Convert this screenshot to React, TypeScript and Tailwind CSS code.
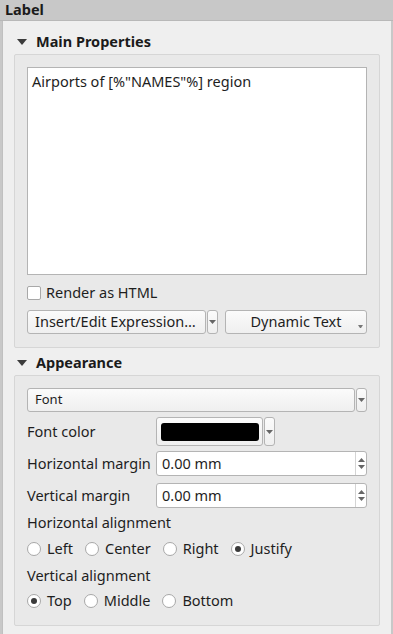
import { ReactNode } from 'react'

const font = { fontFamily: '"Noto Sans", "Open Sans", sans-serif' }

function Arrow() {
  return <svg width="7" height="4" viewBox="0 0 7 4"><path d="M0 0h7L3.5 4z" fill="#666" /></svg>
}

function Section({ title, children }: { title: string; children: ReactNode }) {
  return (
    <div>
      <div className="flex items-center h-[24px] pl-[14px] gap-[9px]">
        <svg width="10" height="6" viewBox="0 0 10 6"><path d="M0 0h10L5 6z" fill="#3c3c3c" /></svg>
        <span className="font-bold text-[14.5px] text-[#1b1b1b]">{title}</span>
      </div>
      <div className="mx-[11px] bg-[#e9e9e9] border border-[#d6d6d6] rounded-[2px] px-[12px]">{children}</div>
    </div>
  )
}

function Radio({ label, checked }: { label: string; checked?: boolean }) {
  return (
    <div className="flex items-center gap-[6px]">
      <span className="w-[14px] h-[14px] rounded-full border border-[#a8a8a8] bg-white flex items-center justify-center">
        {checked && <span className="w-[6px] h-[6px] rounded-full bg-[#3a3a3a]" />}
      </span>
      <span>{label}</span>
    </div>
  )
}

function Spin({ value }: { value: string }) {
  return (
    <div className="flex-1 h-[25px] bg-white border border-[#b4b4b4] rounded-[3px] flex items-center">
      <span className="flex-1 pl-[5px]">{value}</span>
      <div className="w-[11px] h-full border-l border-[#d4d4d4] flex flex-col items-center justify-center gap-[3px]">
        <svg width="7" height="4" viewBox="0 0 7 4"><path d="M0 4h7L3.5 0z" fill="#666" /></svg>
        <Arrow />
      </div>
    </div>
  )
}

const btn = 'border border-[#b4b4b4] rounded-[3px] bg-gradient-to-b from-[#fbfbfb] to-[#efefef]'

export default function App() {
  return (
    <div className="w-[393px] h-[634px] overflow-hidden bg-[#c8c8c8] text-[14.5px] text-[#1e1e1e]" style={font}>
      <div className="h-[21px] flex items-center pl-[5px] font-bold text-[14.5px] text-[#1b1b1b] border-b border-[#b8b8b8]">Label</div>
      <div className="ml-[2px] mr-[2px] h-[613px] bg-[#efefef] border-l border-[#c0c0c0] pt-[9px]">
        <Section title="Main Properties">
          <div className="pt-[12px] pb-[13px]">
            <div className="h-[208px] bg-white border border-[#b4b4b4] px-[4px] pt-[3px]">Airports of [%"NAMES"%] region</div>
            <div className="flex items-center gap-[5px] mt-[11px] h-[14px]">
              <span className="w-[14px] h-[14px] border border-[#a8a8a8] bg-white rounded-[2px]" />
              <span>Render as HTML</span>
            </div>
            <div className="flex mt-[10px] h-[24px]">
              <div className={`w-[179px] ${btn} flex items-center pl-[7px]`}>Insert/Edit Expression…</div>
              <div className={`w-[11px] ml-[1px] ${btn} flex items-center justify-center`}><Arrow /></div>
              <div className={`flex-1 ml-[7px] ${btn} flex items-center justify-center relative`}>
                Dynamic Text
                <span className="absolute right-[3px] bottom-[5px] w-[5px] h-0 border-t-[3px] border-t-[#777] border-x-[2.5px] border-x-transparent" />
              </div>
            </div>
          </div>
        </Section>
        <div className="h-[3px]" />
        <Section title="Appearance">
          <div className="pt-[12px] pb-[15px]">
            <div className="flex h-[24px]">
              <div className={`flex-1 ${btn} flex items-center pl-[7px] text-[13px]`}>Font</div>
              <div className={`w-[11px] ml-[1px] ${btn} flex items-center justify-center`}><Arrow /></div>
            </div>
            <div className="flex items-center h-[29px] mt-[5px]">
              <span className="w-[129px]">Font color</span>
              <div className={`w-[107px] h-[29px] ${btn} flex items-center justify-center`}>
                <span className="w-[98px] h-[18px] bg-black rounded-[3px]" />
              </div>
              <div className={`w-[11px] h-[29px] ml-[1px] ${btn} flex items-center justify-center`}><Arrow /></div>
            </div>
            <div className="flex items-center mt-[5px]">
              <span className="w-[129px]">Horizontal margin</span>
              <Spin value="0.00 mm" />
            </div>
            <div className="flex items-center mt-[7px]">
              <span className="w-[129px]">Vertical margin</span>
              <Spin value="0.00 mm" />
            </div>
            <div className="mt-[6px] h-[18px] flex items-center">Horizontal alignment</div>
            <div className="flex items-center gap-[12px] mt-[8px] h-[18px]">
              <Radio label="Left" />
              <Radio label="Center" />
              <Radio label="Right" />
              <Radio label="Justify" checked />
            </div>
            <div className="mt-[9px] h-[18px] flex items-center">Vertical alignment</div>
            <div className="flex items-center gap-[12px] mt-[7px] h-[18px]">
              <Radio label="Top" checked />
              <Radio label="Middle" />
              <Radio label="Bottom" />
            </div>
          </div>
        </Section>
      </div>
    </div>
  )
}
